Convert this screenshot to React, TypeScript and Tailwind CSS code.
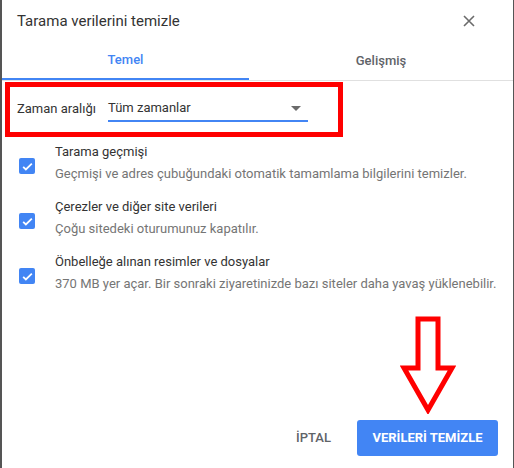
function Check() {
  return (
    <div className="mt-[17px] flex h-[16px] w-[16px] shrink-0 items-center justify-center rounded-[2px] bg-[#4285f4]">
      <svg width="13" height="13" viewBox="0 0 24 24" fill="none">
        <path d="M4 12.5l5 5L20 6.5" stroke="white" strokeWidth="3.2" />
      </svg>
    </div>
  )
}

function Item({ title, desc }: { title: string; desc: string }) {
  return (
    <div className="flex h-[55px] gap-[20px] pl-[17px]">
      <Check />
      <div className="flex flex-col">
        <span className="text-[13px] leading-[22px] text-[#333]">{title}</span>
        <span className="text-[13px] leading-[22px] text-[#757575]">{desc}</span>
      </div>
    </div>
  )
}

export default function App() {
  return (
    <div
      className="relative h-[468px] w-[514px] overflow-hidden border-r border-l-2 border-[#555] bg-white"
      style={{ fontFamily: 'Roboto, "Liberation Sans", sans-serif' }}
    >
      <div className="flex h-[42px] items-center justify-between pr-[38px] pl-[15px]">
        <span className="text-[15px] text-[#333]">Tarama verilerini temizle</span>
        <svg width="12" height="12" viewBox="0 0 12 12">
          <path d="M1 1l10 10M11 1L1 11" stroke="#6b6b6b" strokeWidth="1.6" />
        </svg>
      </div>

      <div className="flex h-[39px] border-b border-[#e0e0e0] text-[13px] font-medium">
        <div className="flex w-[247px] items-center justify-center border-b-2 border-[#4285f4] text-[#4285f4]">
          Temel
        </div>
        <div className="flex flex-1 items-center justify-center text-[#5f6368]">Gelişmiş</div>
      </div>

      <div className="flex h-[56px] items-center pl-[15px]">
        <span className="w-[91px] text-[13px] text-[#333]">Zaman aralığı</span>
        <div className="flex h-[26px] w-[200px] items-center justify-between border-b-2 border-[#4285f4] pr-[7px]">
          <span className="text-[13px] text-[#333]">Tüm zamanlar</span>
          <svg width="10" height="5" viewBox="0 0 10 5">
            <path d="M0 0h10L5 5z" fill="#6b6b6b" />
          </svg>
        </div>
      </div>

      <div className="pt-[4px]">
        <Item
          title="Tarama geçmişi"
          desc="Geçmişi ve adres çubuğundaki otomatik tamamlama bilgilerini temizler."
        />
        <Item title="Çerezler ve diğer site verileri" desc="Çoğu sitedeki oturumunuz kapatılır." />
        <Item
          title="Önbelleğe alınan resimler ve dosyalar"
          desc="370 MB yer açar. Bir sonraki ziyaretinizde bazı siteler daha yavaş yüklenebilir."
        />
      </div>

      <div className="mt-[114px] flex items-center justify-end gap-[26px] pr-[15px]">
        <span className="text-[13px] font-medium text-[#5f6368]">İPTAL</span>
        <button className="h-[36px] w-[141px] rounded-[3px] bg-[#4285f4] text-[13px] font-bold text-white">
          VERİLERİ TEMİZLE
        </button>
      </div>

      {/* annotations */}
      <div className="absolute top-[82px] left-[3px] h-[55px] w-[338px] border-[5px] border-[#ff0000]" />
      <svg className="absolute top-[316px] left-[398px]" width="56" height="98" viewBox="0 0 56 98">
        <path
          d="M18 3h20v49h14L28 94 4 52h14z"
          fill="none"
          stroke="#ff0000"
          strokeWidth="5"
          strokeLinejoin="miter"
        />
      </svg>
    </div>
  )
}
